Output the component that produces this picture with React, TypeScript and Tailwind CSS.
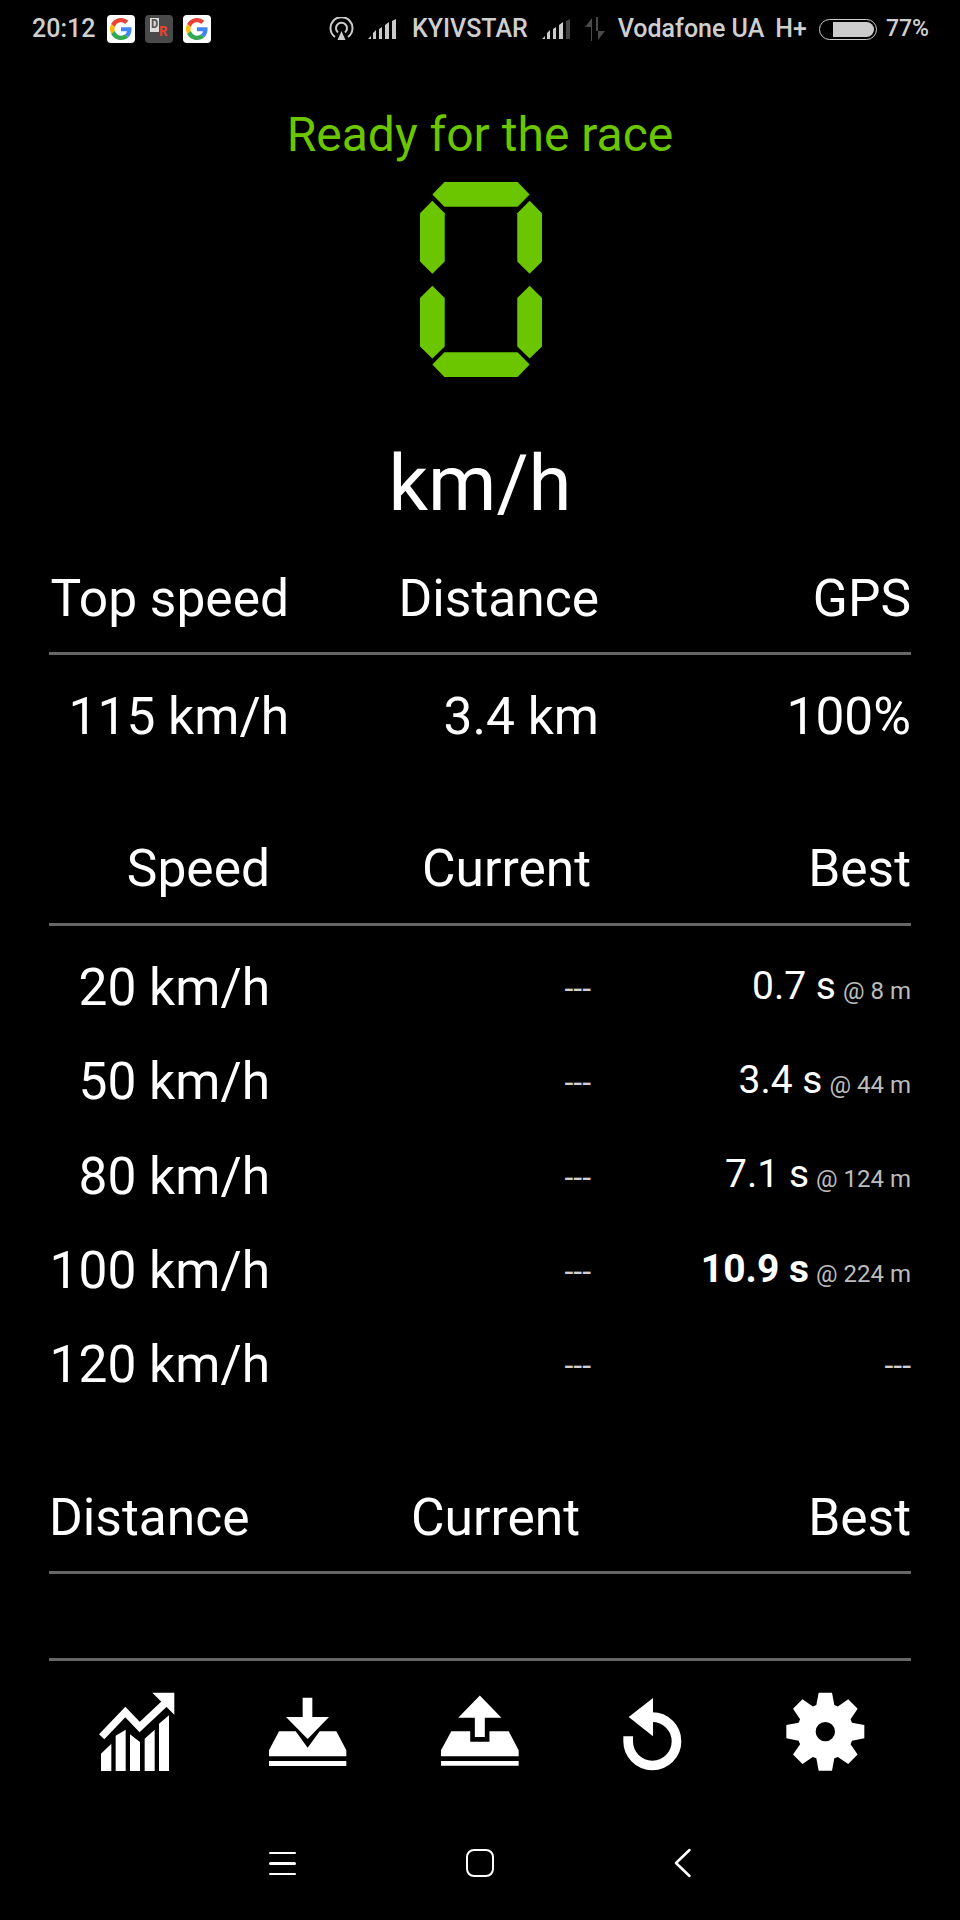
const rowClass = "grid grid-cols-[240px_310px_312px] whitespace-nowrap text-right text-[51.5px] leading-[56px] text-white";
const speedGridClass = "grid grid-cols-[221px_321px_320px] whitespace-nowrap text-right text-[51.5px] leading-[56px] text-white";

const speedRows = [
  { speed: "20 km/h", time: "0.7 s", at: "@ 8 m" },
  { speed: "50 km/h", time: "3.4 s", at: "@ 44 m" },
  { speed: "80 km/h", time: "7.1 s", at: "@ 124 m" },
  { speed: "100 km/h", time: "10.9 s", at: "@ 224 m", bold: true },
  { speed: "120 km/h" },
];

function GoogleIcon() {
  return (
    <div className="flex h-[28px] w-[28px] items-center justify-center rounded-[4px] bg-white">
      <svg viewBox="0 0 48 48" className="h-[22px] w-[22px]">
        <path fill="#EA4335" d="M24 9.5c3.54 0 6.71 1.22 9.21 3.6l6.85-6.85C35.9 2.38 30.47 0 24 0 14.62 0 6.51 5.38 2.56 13.22l7.98 6.19C12.43 13.72 17.74 9.5 24 9.5z" />
        <path fill="#4285F4" d="M46.98 24.55c0-1.57-.15-3.09-.38-4.55H24v9.02h12.94c-.58 2.96-2.26 5.48-4.78 7.18l7.73 6c4.51-4.18 7.09-10.36 7.09-17.65z" />
        <path fill="#FBBC05" d="M10.53 28.59c-.48-1.45-.76-2.99-.76-4.59s.27-3.14.76-4.59l-7.98-6.19C.92 16.46 0 20.12 0 24c0 3.88.92 7.54 2.56 10.78l7.97-6.19z" />
        <path fill="#34A853" d="M24 48c6.48 0 11.93-2.13 15.89-5.81l-7.73-6c-2.15 1.45-4.92 2.3-8.16 2.3-6.26 0-11.57-4.22-13.47-9.91l-7.98 6.19C6.51 42.62 14.62 48 24 48z" />
      </svg>
    </div>
  );
}

function DrIcon() {
  return (
    <div className="flex h-[28px] w-[28px] items-start rounded-[4px] bg-[#4a4a4a] pl-[5px] pt-[3px] font-['Liberation_Mono',monospace] text-[14px] font-bold leading-[14px]">
      <span className="h-[14px] w-[9px] bg-[#ddd] text-center text-[12px] text-[#555]">D</span>
      <span className="mt-[7px] text-[#e8452a]">R</span>
    </div>
  );
}

function Signal({ dim }: { dim?: boolean }) {
  return (
    <svg viewBox="0 0 30 20" className="h-[20px] w-[30px]">
      <path fill="#ccc" d="M0 20l3-3v3zM5 20v-6l3-3v9zM11 20V10l3-2v12zM17 20V6l4-3v17z" />
      <path fill={dim ? "#444" : "#ccc"} d="M24 20V2l4-2v20z" />
    </svg>
  );
}

function StatusBar() {
  return (
    <div className="flex h-[58px] items-center justify-between whitespace-nowrap pl-[32px] pr-[31px] text-[25px] font-medium text-[#cfcfcf]">
      <div className="flex items-center">
        <span className="w-[75px]">20:12</span>
        <div className="flex gap-[10px]">
          <GoogleIcon />
          <DrIcon />
          <GoogleIcon />
        </div>
      </div>
      <div className="flex items-center">
        <svg viewBox="0 0 25 24" className="h-[24px] w-[25px]" fill="none" stroke="#ccc">
          <path strokeWidth="2" d="M6 20a11 11 0 1 1 13 0" />
          <path strokeWidth="2" d="M9 15.500a5.500 5.500 0 1 1 7 0" />
          <path fill="#ccc" stroke="none" d="M12.500 14l4 9h-8z" />
        </svg>
        <div className="ml-[14px]"><Signal /></div>
        <span className="ml-[14px]">KYIVSTAR</span>
        <div className="ml-[14px]"><Signal dim /></div>
        <svg viewBox="0 0 23 24" className="ml-[12px] h-[24px] w-[23px]" fill="#4a4a4a">
          <path d="M7 24V10H1l7-9v23zM12 0v14h9l-7 9V0z" />
        </svg>
        <span className="ml-[11px]">Vodafone UA</span>
        <span className="ml-[11px]">H+</span>
        <div className="ml-[12px] flex h-[21px] w-[58px] justify-end rounded-full border-[1.5px] border-[#ccc] p-[2px]">
          <div className="w-[41px] rounded-r-full rounded-l-[3px] bg-[#ccc]" />
        </div>
        <span className="ml-[9px] text-[23px]">77%</span>
      </div>
    </div>
  );
}

function SevenSegZero() {
  const segments = [
    "157,104 193,67 412,67 448,104 412,141 193,141",
    "157,123 194,160 194,305 157,341 120,305 120,160",
    "448,123 485,160 485,305 448,341 411,305 411,160",
    "157,377 194,414 194,559 157,595 120,559 120,414",
    "448,377 485,414 485,559 448,595 411,559 411,414",
    "157,613 193,576 412,576 448,613 412,650 193,650",
  ];
  return (
    <svg viewBox="120 67 365 583" className="ml-[420px] mt-[19px] block h-[195px] w-[122px]" fill="#6bc600">
      {segments.map((points) => (
        <polygon key={points} points={points} />
      ))}
    </svg>
  );
}

function SpeedRow({ speed, time, at, bold }: { speed: string; time?: string; at?: string; bold?: boolean }) {
  return (
    <div className={`${speedGridClass} h-[94.3px] items-center`}>
      <span>{speed}</span>
      <span className="text-[32px] text-[#d0d0d0]">---</span>
      {time ? (
        <span className="text-[39px]">
          <span className={bold ? "font-bold" : ""}>{time}</span>
          <span className="ml-[7px] text-[24px] text-[#bdbdbd]">{at}</span>
        </span>
      ) : (
        <span className="text-[32px] text-[#d0d0d0]">---</span>
      )}
    </div>
  );
}

function gearPath() {
  const cx = 795;
  const cy = 214;
  const pts: string[] = [];
  for (let k = 0; k < 8; k++) {
    const a = (k * Math.PI) / 4;
    const p = (x: number, y: number) => {
      const px = cx + x * Math.cos(a) - y * Math.sin(a);
      const py = cy + x * Math.sin(a) + y * Math.cos(a);
      return `${px.toFixed(1)} ${py.toFixed(1)}`;
    };
    pts.push(p(-27, -80), p(-20, -117), p(20, -117), p(27, -80));
  }
  return `M${pts.join("L")}Z M${cx - 29} ${cy}a29 29 0 1 0 58 0a29 29 0 1 0 -58 0Z`;
}

function ActionIcons() {
  return (
    <div className="mt-[31px] flex h-[80px] items-start pl-[99px]">
      <svg viewBox="118 95 228 240" className="h-[80px] w-[76px]" fill="#fff">
        <path d="M124 280l31-30v82h-31zM168 226l30-18v124h-30zM211 222l30 23v87h-30zM255 235l30-27v124h-30zM298 190l30-25v167h-30z" />
        <path d="M126 229l71-74 43 45 80-75" fill="none" stroke="#fff" strokeWidth="22" />
        <path d="M278 97h66v66z" />
      </svg>
      <svg viewBox="628 95 234 240" className="ml-[94px] h-[80px] w-[78px]" fill="#fff">
        <path d="M729 112h29v58h50l-64 66-65-66h50z" />
        <path d="M658 213h50l36 49 36-49h50l30 57v18H628v-18z" />
        <path d="M628 302h232v15H628z" />
      </svg>
      <svg viewBox="1144 95 235 240" className="ml-[94px] h-[80px] w-[78px]" fill="#fff">
        <path d="M1261 105l65 67h-50v58h-30v-58h-50z" />
        <path d="M1175 213h57v31h58v-31h58l30 57v18h-234v-18z" />
        <path d="M1144 302h234v15h-234z" />
      </svg>
      <svg viewBox="190 95 177 240" className="ml-[104px] h-[80px] w-[59px]" fill="#fff">
        <path d="M205.500 228v15a72.500 72.500 0 1 0 72.500-72.500" fill="none" stroke="#fff" strokeWidth="29" />
        <path d="M280 113l-73 57 73 58z" />
      </svg>
      <svg viewBox="677 95 237 240" className="ml-[104px] h-[80px] w-[79px]" fill="#fff">
        <path fillRule="evenodd" d={gearPath()} />
      </svg>
    </div>
  );
}

function NavBar() {
  return (
    <div className="mt-[76px] flex h-[30px] items-center pl-[269px]">
      <div className="flex w-[27px] flex-col gap-[8px]">
        <div className="h-[2.500px] rounded-full bg-white" />
        <div className="h-[2.500px] rounded-full bg-white" />
        <div className="h-[2.500px] rounded-full bg-white" />
      </div>
      <div className="ml-[170px] h-[28px] w-[28px] rounded-[8px] border-[2.500px] border-white" />
      <svg viewBox="0 0 17 30" className="ml-[180px] h-[30px] w-[17px]" fill="none" stroke="#fff" strokeWidth="2.500" strokeLinecap="round" strokeLinejoin="round">
        <path d="M15.500 2L2 15l13.500 13" />
      </svg>
    </div>
  );
}

export default function App() {
  return (
    <div className="h-[1920px] w-[960px] overflow-hidden bg-black font-['Roboto',sans-serif]">
      <StatusBar />
      <h1 className="mt-[49px] text-center text-[48px] font-normal leading-[56px] text-[#6bc600]">Ready for the race</h1>
      <SevenSegZero />
      <div className="mt-[63px] text-center text-[78px] leading-[88px] text-white">km/h</div>

      <div className="mt-[43px] px-[49px]">
        <div className={`${rowClass} h-[84px] border-b-[3px] border-[#666]`}>
          <span>Top speed</span>
          <span>Distance</span>
          <span>GPS</span>
        </div>
        <div className={`${rowClass} mt-[34px]`}>
          <span>115 km/h</span>
          <span>3.4 km</span>
          <span>100%</span>
        </div>

        <div className={`${speedGridClass} mt-[96px] h-[85px] border-b-[3px] border-[#666]`}>
          <span>Speed</span>
          <span>Current</span>
          <span>Best</span>
        </div>
        <div className="mt-[15px]">
          {speedRows.map((row) => (
            <SpeedRow key={row.speed} {...row} />
          ))}
        </div>

        <div className="mt-[78px] grid h-[84px] grid-cols-[200px_331px_331px] whitespace-nowrap border-b-[3px] border-[#666] text-right text-[51.5px] leading-[56px] text-white">
          <span>Distance</span>
          <span>Current</span>
          <span>Best</span>
        </div>
        <div className="mt-[84px] h-[3px] bg-[#666]" />
      </div>

      <ActionIcons />
      <NavBar />
    </div>
  );
}
